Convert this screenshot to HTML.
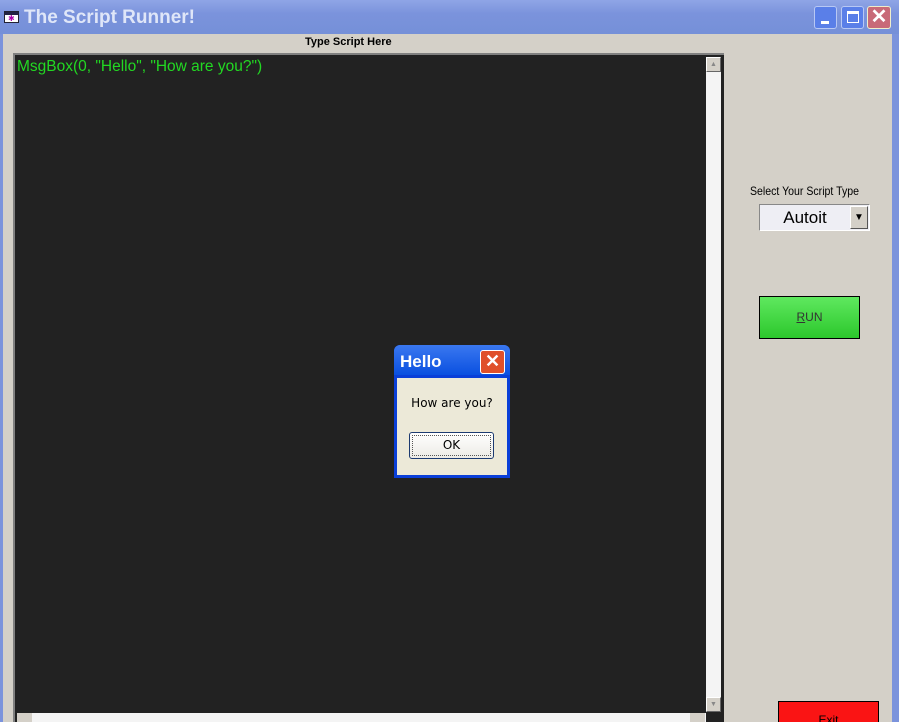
<!DOCTYPE html>
<html style="width:899px;height:722px;overflow:hidden"><head><style>
*{margin:0;padding:0;box-sizing:border-box}
html,body{width:899px;height:722px;overflow:hidden}
body{background:#d4d0c8;position:relative;font-family:"Liberation Sans",sans-serif}
.abs{position:absolute}
</style></head><body>
<div class="abs" style="left:0;top:0;width:899px;height:34px;background:linear-gradient(#8fa5e6,#7b93dc 40%,#7590d8);"></div>
<div class="abs" style="left:4px;top:11px;width:15px;height:12px;background:#fff;border:1px solid #223;"><div style="height:3px;background:#224"></div><div style="color:#a0a;font-size:8px;line-height:8px;padding-left:3px">✱</div></div>
<div class="abs" style="left:24px;top:7px;color:#dfe6f8;font-size:19px;font-weight:bold;">The Script Runner!</div>
<div class="abs" style="left:814px;top:6px;width:23px;height:23px;background:#5a7fe8;border:1px solid #b8c8f4;border-radius:3px"><div style="position:absolute;left:6px;top:14px;width:8px;height:3px;background:#fff"></div></div>
<div class="abs" style="left:841px;top:6px;width:23px;height:23px;background:#5a7fe8;border:1px solid #b8c8f4;border-radius:3px"><div style="position:absolute;left:5px;top:4px;width:12px;height:12px;border:1px solid #fff;border-top-width:3px"></div></div>
<div class="abs" style="left:867px;top:6px;width:24px;height:23px;background:#c86a78;border:1px solid #eec;border-radius:3px;color:#fff;font-size:20px;font-weight:bold;text-align:center;line-height:21px">✕</div>
<div class="abs" style="left:0;top:34px;width:3px;height:688px;background:#7b93dc"></div>
<div class="abs" style="left:892px;top:34px;width:7px;height:688px;background:#7b93dc"></div>
<div class="abs" style="left:3px;top:34px;width:889px;height:688px;background:#d4d0c8"></div>
<div class="abs" style="left:305px;top:36px;font-size:11px;font-weight:bold;">Type Script Here</div>
<div class="abs" style="left:13px;top:53px;width:711px;height:669px;border-top:2px solid #808080;border-left:2px solid #808080;background:#222"></div>
<div class="abs" style="left:17px;top:58px;color:#22d822;font-size:15.5px;">MsgBox(0, "Hello", "How are you?")</div>
<div class="abs" style="left:706px;top:57px;width:15px;height:655px;background:#f4f4f4"></div>
<div class="abs" style="left:706px;top:57px;width:15px;height:15px;background:#d4d0c8;border:1px solid #fff;border-right-color:#666;border-bottom-color:#666;font-size:7px;text-align:center;line-height:13px;color:#888">▲</div>
<div class="abs" style="left:706px;top:697px;width:15px;height:15px;background:#d4d0c8;border:1px solid #fff;border-right-color:#666;border-bottom-color:#666;font-size:7px;text-align:center;line-height:13px;color:#888">▼</div>
<div class="abs" style="left:17px;top:713px;width:689px;height:9px;background:#f4f4f4"></div>
<div class="abs" style="left:17px;top:713px;width:15px;height:9px;background:#d4d0c8"></div>
<div class="abs" style="left:690px;top:713px;width:15px;height:9px;background:#d4d0c8"></div>
<div class="abs" style="left:750px;top:184px;font-size:12px;transform:scaleX(0.88);transform-origin:left">Select Your Script Type</div>
<div class="abs" style="left:759px;top:204px;width:111px;height:27px;border:1px solid #888;border-right-color:#fff;border-bottom-color:#fff;background:#eeeef4"></div>
<div class="abs" style="left:760px;top:205px;width:90px;height:25px;font-size:17px;text-align:center;line-height:25px">Autoit</div>
<div class="abs" style="left:850px;top:206px;width:18px;height:23px;background:#d4d0c8;border:1px solid #fff;border-right-color:#555;border-bottom-color:#555;font-size:10px;text-align:center;line-height:21px">▼</div>
<div class="abs" style="left:759px;top:296px;width:101px;height:43px;border:1px solid #000;background:linear-gradient(#5fe85f,#2cc82c);font-size:12px;text-align:center;line-height:41px;color:#333"><u>R</u>UN</div>
<div class="abs" style="left:778px;top:701px;width:101px;height:21px;border:1px solid #000;border-bottom:none;background:#fa1414;font-size:12px;text-align:center;line-height:36px">Exit</div>
<div class="abs" style="left:394px;top:345px;width:116px;height:133px;background:#0a3fd8;border-radius:6px 6px 0 0"></div>
<div class="abs" style="left:394px;top:345px;width:116px;height:30px;background:linear-gradient(#3a78f0,#0a50e0);border-radius:6px 6px 0 0"></div>
<div class="abs" style="left:400px;top:352px;color:#fff;font-size:17px;font-weight:bold">Hello</div>
<div class="abs" style="left:480px;top:350px;width:25px;height:24px;background:#e0502a;border:1px solid #fff;border-radius:3px;color:#fff;font-size:18px;font-weight:bold;text-align:center;line-height:21px">✕</div>
<div class="abs" style="left:397px;top:378px;width:110px;height:97px;background:#ece9d8"></div>
<div class="abs" style="left:397px;top:396px;width:110px;text-align:center;font-size:12px;font-family:'DejaVu Sans',sans-serif">How are you?</div>
<div class="abs" style="left:409px;top:432px;width:85px;height:27px;border:1px solid #1c3a70;border-radius:3px;background:linear-gradient(#fff,#ecebe6);font-size:12px;text-align:center;line-height:25px;font-family:'DejaVu Sans',sans-serif"><div style="position:absolute;left:2px;top:2px;right:2px;bottom:2px;border:1px dotted #555"></div>OK</div>
</body></html>
